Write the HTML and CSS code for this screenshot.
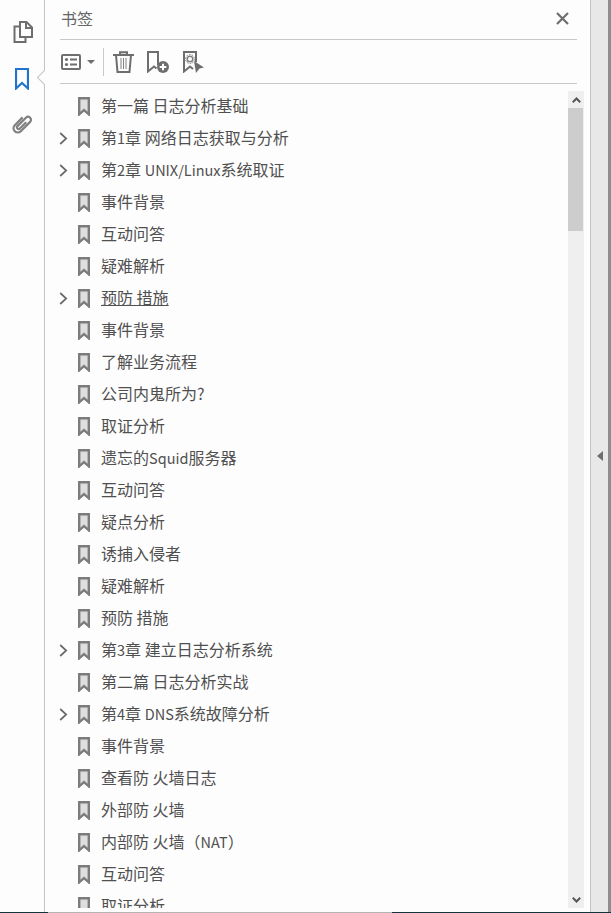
FILE: index.html
```html
<!DOCTYPE html>
<html>
<head>
  <title>书签</title>
  <link rel="stylesheet" href="styles.css">
</head>
<body>
  <svg class="defs" width="0" height="0">
    <symbol id="mark" viewBox="0 0 12 19">
      <path d="M1.200 1.200H10.800V17.300L6 13.200L1.200 17.300Z" fill="#dedede" stroke="#7c7c7c" stroke-width="2.400"/>
    </symbol>
    <symbol id="chevron" viewBox="0 0 9 13">
      <path d="M1.200 1L7.200 6.500L1.200 12" fill="none" stroke="#6a6a6a" stroke-width="1.700"/>
    </symbol>
  </svg>
  <div class="app">
    <div class="rail">
      <svg class="rail-icon" width="20" height="22" viewBox="0 0 20 22">
        <path d="M7 1H13.500L19 6.500V16H7Z M13 1V7H19" fill="none" stroke="#6e6e6e" stroke-width="2"/>
        <path d="M7 5.500H1.500V21H12.500V16" fill="none" stroke="#6e6e6e" stroke-width="2"/>
      </svg>
      <svg class="rail-icon" width="14" height="22" viewBox="0 0 14 22">
        <path d="M1 1H13V20.500L7 15L1 20.500Z" fill="none" stroke="#1f74cc" stroke-width="2.200"/>
      </svg>
      <svg class="rail-icon" width="22" height="22" viewBox="0 0 22 22">
        <path transform="translate(11 11) rotate(45) scale(.85) translate(-10 -12)" d="M5 6V19A5 5 0 0 0 15 19V3.500A3.500 3.500 0 0 0 8 3.500V17.500A2 2 0 0 0 12 17.500V7" fill="none" stroke="#808080" stroke-width="2.600"/>
      </svg>
      <div class="notch"></div>
    </div>
    <div class="panel">
      <div class="panel-head">
        <span class="panel-title">书签</span>
        <svg width="13" height="13" viewBox="0 0 13 13">
          <path d="M1 1L12 12M12 1L1 12" stroke="#6e6e6e" stroke-width="2.200"/>
        </svg>
      </div>
      <div class="toolbar">
        <svg width="20" height="16" viewBox="0 0 20 16">
          <rect x="1" y="1" width="18" height="14" rx="1" fill="none" stroke="#6e6e6e" stroke-width="2"/>
          <circle cx="5.500" cy="5.500" r="1.600" fill="#6e6e6e"/>
          <circle cx="5.500" cy="10.500" r="1.600" fill="#6e6e6e"/>
          <path d="M9 5.500H16M9 10.500H16" stroke="#6e6e6e" stroke-width="2"/>
        </svg>
        <span class="caret"></span>
        <span class="tool-sep"></span>
        <svg class="tool-trash" width="21" height="22" viewBox="0 0 21 22">
          <path d="M0 4H21M7 4V1.200H14V4" fill="none" stroke="#6e6e6e" stroke-width="2"/>
          <path d="M3 4L4.500 21H16.500L18 4" fill="none" stroke="#6e6e6e" stroke-width="2"/>
          <path d="M8 7V18M10.500 7V18M13 7V18" stroke="#808080" stroke-width="1"/>
        </svg>
        <svg class="tool-add" width="23" height="22" viewBox="0 0 23 22">
          <path d="M11 14V1H1V20.500L7 15.500L9.500 17.500" fill="none" stroke="#6e6e6e" stroke-width="2"/>
          <circle cx="16" cy="16" r="6" fill="#6e6e6e"/>
          <path d="M12.700 16H19.300M16 12.700V19.300" stroke="#fff" stroke-width="2"/>
        </svg>
        <svg class="tool-props" width="21" height="22" viewBox="0 0 21 22">
          <path d="M13 11V1H1V20.500L7 15.500L10 18" fill="none" stroke="#6e6e6e" stroke-width="2"/>
          <circle cx="7" cy="8" r="2.800" fill="none" stroke="#808080" stroke-width="1.500"/>
          <circle cx="7" cy="8" r="4.500" fill="none" stroke="#808080" stroke-width="1" stroke-dasharray="1.500 1.300"/>
          <path d="M11 10L21 16.500L16.500 17.500L13 22Z" fill="#6e6e6e"/>
        </svg>
      </div>
      <div class="tree-wrap">
        <div class="tree">
          <div class="row"><span class="twist"></span><svg class="mark"><use href="#mark"/></svg><span class="label">第一篇 日志分析基础</span></div>
          <div class="row"><span class="twist"><svg class="chevron"><use href="#chevron"/></svg></span><svg class="mark"><use href="#mark"/></svg><span class="label">第<span class="latin">1</span>章 网络日志获取与分析</span></div>
          <div class="row"><span class="twist"><svg class="chevron"><use href="#chevron"/></svg></span><svg class="mark"><use href="#mark"/></svg><span class="label">第<span class="latin">2</span>章 <span class="latin">UNIX/Linux</span>系统取证</span></div>
          <div class="row"><span class="twist"></span><svg class="mark"><use href="#mark"/></svg><span class="label">事件背景</span></div>
          <div class="row"><span class="twist"></span><svg class="mark"><use href="#mark"/></svg><span class="label">互动问答</span></div>
          <div class="row"><span class="twist"></span><svg class="mark"><use href="#mark"/></svg><span class="label">疑难解析</span></div>
          <div class="row"><span class="twist"><svg class="chevron"><use href="#chevron"/></svg></span><svg class="mark"><use href="#mark"/></svg><span class="label current">预防 措施</span></div>
          <div class="row"><span class="twist"></span><svg class="mark"><use href="#mark"/></svg><span class="label">事件背景</span></div>
          <div class="row"><span class="twist"></span><svg class="mark"><use href="#mark"/></svg><span class="label">了解业务流程</span></div>
          <div class="row"><span class="twist"></span><svg class="mark"><use href="#mark"/></svg><span class="label">公司内鬼所为?</span></div>
          <div class="row"><span class="twist"></span><svg class="mark"><use href="#mark"/></svg><span class="label">取证分析</span></div>
          <div class="row"><span class="twist"></span><svg class="mark"><use href="#mark"/></svg><span class="label">遗忘的<span class="latin">Squid</span>服务器</span></div>
          <div class="row"><span class="twist"></span><svg class="mark"><use href="#mark"/></svg><span class="label">互动问答</span></div>
          <div class="row"><span class="twist"></span><svg class="mark"><use href="#mark"/></svg><span class="label">疑点分析</span></div>
          <div class="row"><span class="twist"></span><svg class="mark"><use href="#mark"/></svg><span class="label">诱捕入侵者</span></div>
          <div class="row"><span class="twist"></span><svg class="mark"><use href="#mark"/></svg><span class="label">疑难解析</span></div>
          <div class="row"><span class="twist"></span><svg class="mark"><use href="#mark"/></svg><span class="label">预防 措施</span></div>
          <div class="row"><span class="twist"><svg class="chevron"><use href="#chevron"/></svg></span><svg class="mark"><use href="#mark"/></svg><span class="label">第<span class="latin">3</span>章 建立日志分析系统</span></div>
          <div class="row"><span class="twist"></span><svg class="mark"><use href="#mark"/></svg><span class="label">第二篇 日志分析实战</span></div>
          <div class="row"><span class="twist"><svg class="chevron"><use href="#chevron"/></svg></span><svg class="mark"><use href="#mark"/></svg><span class="label">第<span class="latin">4</span>章 <span class="latin">DNS</span>系统故障分析</span></div>
          <div class="row"><span class="twist"></span><svg class="mark"><use href="#mark"/></svg><span class="label">事件背景</span></div>
          <div class="row"><span class="twist"></span><svg class="mark"><use href="#mark"/></svg><span class="label">查看防 火墙日志</span></div>
          <div class="row"><span class="twist"></span><svg class="mark"><use href="#mark"/></svg><span class="label">外部防 火墙</span></div>
          <div class="row"><span class="twist"></span><svg class="mark"><use href="#mark"/></svg><span class="label">内部防 火墙（<span class="latin">NAT</span>）</span></div>
          <div class="row"><span class="twist"></span><svg class="mark"><use href="#mark"/></svg><span class="label">互动问答</span></div>
          <div class="row"><span class="twist"></span><svg class="mark"><use href="#mark"/></svg><span class="label">取证分析</span></div>
        </div>
        <div class="scrollbar">
          <div class="scroll-btn">
            <svg width="9" height="6" viewBox="0 0 9 6"><path d="M.8 5.200L4.500 1.500L8.200 5.200" fill="none" stroke="#555" stroke-width="2"/></svg>
          </div>
          <div class="scroll-thumb"></div>
          <div class="scroll-track"></div>
          <div class="scroll-btn">
            <svg width="9" height="6" viewBox="0 0 9 6"><path d="M.8 .8L4.500 4.500L8.200 .8" fill="none" stroke="#555" stroke-width="2"/></svg>
          </div>
        </div>
      </div>
    </div>
    <div class="collapse-strip">
      <span class="collapse-arrow"></span>
    </div>
  </div>
  <div class="status">
    <div class="status-dark"></div>
    <div class="status-light"></div>
    <div class="status-fill"></div>
  </div>
</body>
</html>
```

FILE: styles.css
```css
* {
  box-sizing: border-box;
}
html, body {
  margin: 0;
  height: 100%;
}
body {
  display: flex;
  flex-direction: column;
  overflow: hidden;
  background-color: #fdfdfd;
  color: #505050;
  font-family: "Noto Sans CJK SC", "Liberation Sans", sans-serif;
  font-size: 16px;
}
.defs {
  position: absolute;
}
.app {
  flex: 1;
  display: flex;
  min-height: 0;
}

/* left icons */
.rail {
  position: relative;
  flex: 0 0 45px;
  display: flex;
  flex-direction: column;
  align-items: center;
  padding-top: 21px;
  border-right: 1px solid #c4c4c4;
}
.rail-icon {
  flex: none;
  display: block;
}
.rail-icon:nth-child(1) {
  margin-left: 2px;
}
.rail-icon:nth-child(2) {
  margin-top: 25px;
}
.rail-icon:nth-child(3) {
  margin-top: 23px;
  margin-left: -1px;
}
.notch {
  position: absolute;
  top: 69px;
  right: -1px;
  width: 8px;
  height: 16px;
  overflow: hidden;
}
.notch::after {
  content: "";
  position: absolute;
  left: 2px;
  top: 3px;
  width: 10px;
  height: 10px;
  transform: rotate(45deg);
  background-color: #fdfdfd;
  border-left: 1px solid #c4c4c4;
  border-bottom: 1px solid #c4c4c4;
}

/* panel */
.panel {
  flex: 1;
  min-width: 0;
  display: flex;
  flex-direction: column;
}
.panel-head {
  flex: 0 0 40px;
  margin: 0 13px 0 15px;
  padding: 0 8px 3px 1px;
  display: flex;
  justify-content: space-between;
  align-items: center;
  border-bottom: 1px solid #c8c8c8;
}
.panel-title {
  color: #666;
}
.toolbar {
  flex: 0 0 44px;
  margin: 0 13px 0 15px;
  padding-left: 1px;
  display: flex;
  align-items: center;
  border-bottom: 1px solid #c8c8c8;
}
.caret {
  margin-left: 6px;
  border-top: 4px solid #6e6e6e;
  border-left: 4px solid transparent;
  border-right: 4px solid transparent;
}
.tool-sep {
  margin-left: 8px;
  width: 1px;
  height: 28px;
  background-color: #c8c8c8;
}
.tool-trash {
  margin-left: 9px;
}
.tool-add {
  margin-left: 13px;
}
.tool-props {
  margin-left: 13px;
}

/* bookmark tree */
.tree-wrap {
  flex: 1;
  min-height: 0;
  display: flex;
  padding: 6px 6px 4px 0;
}
.tree {
  flex: 1;
  min-width: 0;
  overflow: hidden;
}
.row {
  height: 32px;
  display: flex;
  align-items: center;
  white-space: nowrap;
  line-height: 32px;
}
.twist {
  flex: 0 0 33px;
  padding-left: 14px;
  display: flex;
  align-items: center;
}
.chevron {
  width: 9px;
  height: 13px;
}
.mark {
  flex: none;
  width: 12px;
  height: 19px;
  margin: 1px 11px 0 0;
}
.label {
  margin-bottom: 2px;
}
.latin {
  font-size: 14.5px;
}
.current {
  text-decoration: underline;
}
.scrollbar {
  flex: 0 0 16px;
  margin-top: 1px;
  display: flex;
  flex-direction: column;
  background-color: #efefef;
}
.scroll-btn {
  flex: 0 0 17px;
  display: flex;
  align-items: center;
  justify-content: center;
}
.scroll-thumb {
  flex: 0 0 123px;
  width: 15px;
  background-color: #cdcdcd;
}
.scroll-track {
  flex: 1;
}

/* right strip */
.collapse-strip {
  flex: 0 0 21px;
  display: flex;
  align-items: center;
  justify-content: center;
  background-color: #e8e8e8;
  border-left: 1px solid #c4c4c4;
  border-right: 3px solid #8e8e8e;
}
.collapse-arrow {
  border-right: 6px solid #6e6e6e;
  border-top: 5px solid transparent;
  border-bottom: 5px solid transparent;
}

/* bottom edge */
.status {
  flex: 0 0 1px;
  display: flex;
}
.status-dark {
  flex: 0 0 48px;
  background-color: #12343c;
}
.status-light {
  flex: 0 0 344px;
  background-color: #b4b4b4;
}
.status-fill {
  flex: 1;
  background-color: #12343c;
}
```
